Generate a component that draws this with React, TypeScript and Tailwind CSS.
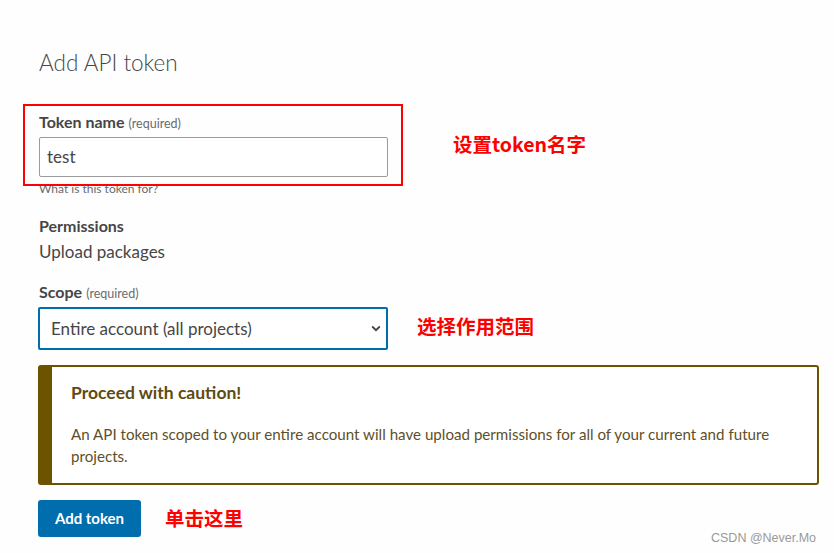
import React from "react";

export default function App() {
  return (
    <div
      className="relative w-[834px] h-[553px] overflow-hidden bg-[#fefefe] text-[#464646]"
      style={{ fontFamily: "Lato, 'Noto Sans', sans-serif" }}
    >
      <div className="flex flex-col items-start pl-[38px] pt-[49px]">
        <h1 className="ml-[1px] h-[28px] text-[22.5px] font-light leading-[28px] text-[#464646]">Add API token</h1>

        <div className="ml-[1px] mt-[35px] flex h-[20px] items-baseline gap-[4px] leading-[20px]">
          <span className="text-[16px] font-bold text-[#464646]">Token name</span>
          <span className="text-[12.5px] text-[#6b6b6b]">(required)</span>
        </div>
        <div className="ml-[1px] mt-[5px] flex h-[40px] w-[349px] items-center rounded-[2px] border border-[#9b9b9b] bg-white px-[7px] text-[17px] text-[#464646]">
          test
        </div>
        <div className="ml-[1px] mt-[5px] h-[14px] text-[12px] leading-[14px] text-[#6b6b6b]">What is this token for?</div>

        <div className="ml-[1px] mt-[20px] h-[20px] text-[16px] font-bold leading-[20px]">Permissions</div>
        <div className="ml-[1px] mt-[5px] h-[22px] text-[17px] leading-[22px]">Upload packages</div>

        <div className="ml-[1px] mt-[19px] flex h-[20px] items-baseline gap-[4px] leading-[20px]">
          <span className="text-[16px] font-bold text-[#464646]">Scope</span>
          <span className="text-[12.5px] text-[#6b6b6b]">(required)</span>
        </div>
        <div className="mt-[5px] flex h-[43px] w-[350px] items-center justify-between rounded-[2px] border-2 border-[#006dad] bg-white pl-[11px] pr-[5px] text-[17px] text-[#464646]">
          <span>Entire account (all projects)</span>
          <svg width="10" height="7" viewBox="0 0 10 7" fill="none">
            <path d="M1.2 1.5 L5 5.2 L8.8 1.5" stroke="#464646" strokeWidth="1.8" />
          </svg>
        </div>

        <div className="mt-[15px] flex h-[120px] w-[781px] rounded-[3px] border-2 border-l-[14px] border-[#6b5300] bg-white pl-[19px] pt-[14px] pr-[16px]">
          <div className="flex flex-col">
            <div className="h-[24px] text-[17.5px] font-bold leading-[24px] text-[#5e4b11]">Proceed with caution!</div>
            <div className="mt-[18px] text-[15.15px] leading-[22px] text-[#5e4f2a]">
              An API token scoped to your entire account will have upload permissions for all of your current and future
              <br />
              projects.
            </div>
          </div>
        </div>

        <button className="mt-[15px] flex h-[37px] w-[103px] items-center justify-center rounded-[3px] bg-[#006dad] text-[15px] font-bold text-white">
          Add token
        </button>
      </div>

      {/* annotations */}
      <div className="absolute left-[23px] top-[104px] h-[82px] w-[380px] border-2 border-[#ff0000]" />
      <div
        className="absolute left-[453px] top-[132px] text-[19.5px] font-bold leading-[24px] text-[#ff0000]"
        style={{ fontFamily: "'Noto Sans CJK SC', sans-serif" }}
      >
        设置token名字
      </div>
      <div
        className="absolute left-[417px] top-[314px] text-[19.5px] font-bold leading-[24px] text-[#ff0000]"
        style={{ fontFamily: "'Noto Sans CJK SC', sans-serif" }}
      >
        选择作用范围
      </div>
      <div
        className="absolute left-[165px] top-[506px] text-[19.5px] font-bold leading-[24px] text-[#ff0000]"
        style={{ fontFamily: "'Noto Sans CJK SC', sans-serif" }}
      >
        单击这里
      </div>
      <div
        className="absolute left-[711px] top-[530px] text-[12.5px] leading-[16px] text-[#9a9a9a]"
        style={{ fontFamily: "'Liberation Sans', sans-serif" }}
      >
        CSDN @Never.Mo
      </div>
    </div>
  );
}
